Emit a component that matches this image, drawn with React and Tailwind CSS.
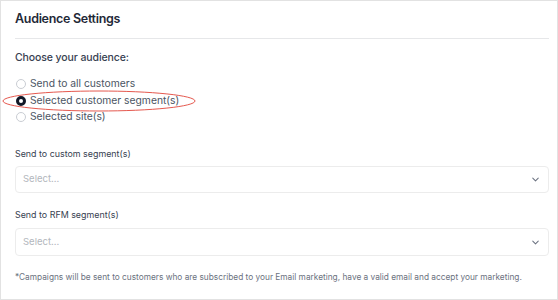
import { ChevronDown } from 'lucide-react';

const OPTIONS = [
  { label: 'Send to all customers', checked: false },
  { label: 'Selected customer segment(s)', checked: true },
  { label: 'Selected site(s)', checked: false },
];

function Radio({ checked }) {
  if (checked) {
    return <span className="h-[10px] w-[10px] rounded-full border-[3px] border-[#111827] bg-white shrink-0" />;
  }
  return <span className="h-[10px] w-[10px] rounded-full border border-[#c9cdd3] bg-white shrink-0" />;
}

function SelectBox({ h }) {
  return (
    <div className={`flex items-center justify-between ${h} rounded-[4px] border border-[#ececec] bg-white pl-[7px] pr-[7px]`}>
      <span className="text-[9.5px] text-[#b3b7bd]">Select...</span>
      <ChevronDown className="h-[11px] w-[11px] text-[#6b7280]" strokeWidth={2.2} />
    </div>
  );
}

export default function App() {
  return (
    <div className="w-[558px] h-[300px] bg-white border border-[#e2e2e2] font-['Inter',sans-serif] pl-[14px] pr-[8px]">
      {/* Header */}
      <div className="h-[38px] border-b border-[#e6e7e9] flex items-center">
        <h2 className="text-[12.5px] font-semibold text-[#1f2937] tracking-[-0.3px]">Audience Settings</h2>
      </div>

      {/* Audience radios */}
      <p className="mt-[12px] text-[10.5px] font-medium text-[#374151] leading-[14px] tracking-[-0.1px]">Choose your audience:</p>
      <div className="relative mt-[13px] flex flex-col gap-[4.5px]">
        {OPTIONS.map((o) => (
          <label key={o.label} className="flex items-center gap-[4px] pl-[1px] h-[12px] text-[10.3px] text-[#4b5563]">
            <Radio checked={o.checked} />
            <span>{o.label}</span>
          </label>
        ))}
        {/* red annotation ellipse */}
        <svg className="absolute left-[-13px] top-[12px] pointer-events-none" width="194" height="22" viewBox="0 0 194 22">
          <ellipse cx="97" cy="11" rx="96" ry="10" fill="none" stroke="#e5594f" strokeWidth="1" />
        </svg>
      </div>

      {/* Custom segment */}
      <p className="mt-[25px] text-[8.9px] text-[#374151] leading-[12px]">Send to custom segment(s)</p>
      <div className="mt-[6px]">
        <SelectBox h="h-[27px]" />
      </div>

      {/* RFM segment */}
      <p className="mt-[16px] text-[8.9px] text-[#374151] leading-[12px]">Send to RFM segment(s)</p>
      <div className="mt-[7px]">
        <SelectBox h="h-[28px]" />
      </div>

      <p className="mt-[15px] text-[8.3px] text-[#6b7280] leading-[12px] whitespace-nowrap">
        *Campaigns will be sent to customers who are subscribed to your Email marketing, have a valid email and accept your marketing.
      </p>
    </div>
  );
}
